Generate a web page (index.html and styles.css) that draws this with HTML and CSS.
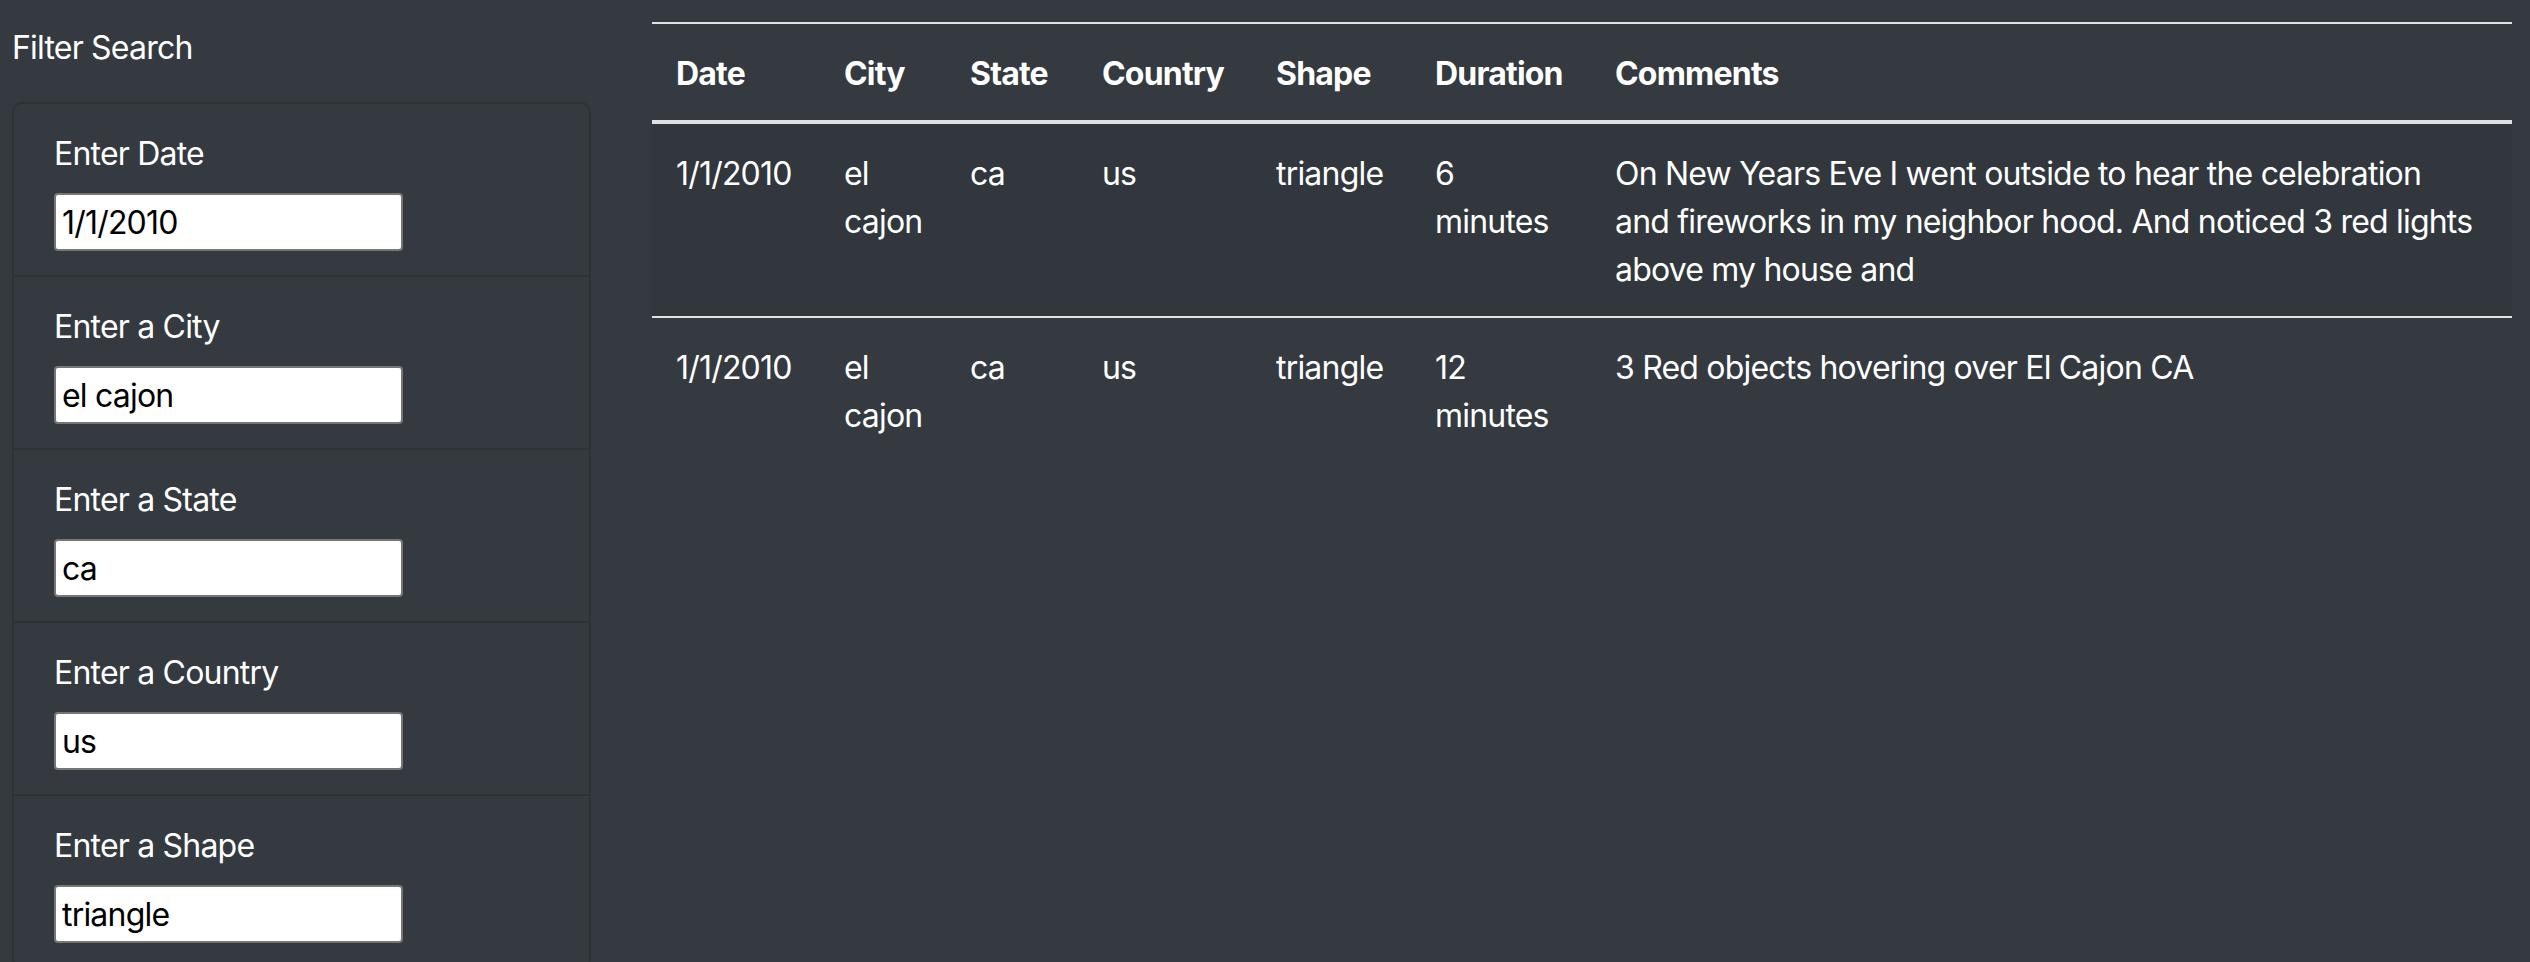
FILE: index.html
```html
<!DOCTYPE html>
<html lang="en">
<head>
<meta charset="utf-8">
<title>UFO Sightings</title>
<link rel="stylesheet" href="styles.css">
</head>
<body>
<div class="page">
  <aside class="sidebar">
    <h5 class="sidebar-title">Filter Search</h5>
    <ul class="filters">
      <li class="filter">
        <label class="filter-label" for="date">Enter Date</label>
        <input class="filter-input" id="date" type="text" value="1/1/2010">
      </li>
      <li class="filter">
        <label class="filter-label" for="city">Enter a City</label>
        <input class="filter-input" id="city" type="text" value="el cajon">
      </li>
      <li class="filter">
        <label class="filter-label" for="state">Enter a State</label>
        <input class="filter-input" id="state" type="text" value="ca">
      </li>
      <li class="filter">
        <label class="filter-label" for="country">Enter a Country</label>
        <input class="filter-input" id="country" type="text" value="us">
      </li>
      <li class="filter">
        <label class="filter-label" for="shape">Enter a Shape</label>
        <input class="filter-input" id="shape" type="text" value="triangle">
      </li>
    </ul>
  </aside>
  <main class="results">
    <table class="ufo-table">
      <colgroup>
        <col class="c-date"><col class="c-city"><col class="c-state"><col class="c-country"><col class="c-shape"><col class="c-duration"><col class="c-comments">
      </colgroup>
      <thead>
        <tr>
          <th>Date</th><th>City</th><th>State</th><th>Country</th><th>Shape</th><th>Duration</th><th>Comments</th>
        </tr>
      </thead>
      <tbody>
        <tr class="row-odd">
          <td>1/1/2010</td><td>el cajon</td><td>ca</td><td>us</td><td>triangle</td><td>6 minutes</td>
          <td>On New Years Eve I went outside to hear the celebration<br>and fireworks in my neighbor hood. And noticed 3 red lights above my house and</td>
        </tr>
        <tr>
          <td>1/1/2010</td><td>el cajon</td><td>ca</td><td>us</td><td>triangle</td><td>12 minutes</td>
          <td>3 Red objects hovering over El Cajon CA</td>
        </tr>
      </tbody>
    </table>
  </main>
</div>
</body>
</html>
```

FILE: styles.css
```css
* { box-sizing: border-box; }

html, body {
  margin: 0;
  padding: 0;
  height: 100%;
}

body {
  background: #343a40;
  color: #ffffff;
  font-family: Inter, "Noto Sans", "Liberation Sans", sans-serif;
  font-size: 32px;
  line-height: 1.5;
  letter-spacing: -0.025em;
  overflow: hidden;
}

.page {
  display: flex;
  align-items: flex-start;
  gap: 61px;
  padding-left: 12px;
}

.sidebar {
  width: 579px;
  flex: 0 0 579px;
}

.sidebar-title {
  margin: 0;
  padding-top: 24px;
  margin-bottom: 30px;
  font-size: 32px;
  font-weight: 400;
  line-height: 48px;
}

.filters {
  list-style: none;
  margin: 0;
  padding: 0;
  border: 2px solid #2d3237;
  border-radius: 10px;
}

.filter {
  padding: 24px 40px;
  border-top: 2px solid #2d3237;
}

.filter:first-child {
  border-top: none;
}

.filter-label {
  display: block;
  padding-top: 2px;
  margin-bottom: 15px;
}

.filter-input {
  display: block;
  width: 349px;
  height: 58px;
  margin: 0;
  padding: 0 6px;
  border: 2px solid #767676;
  border-radius: 4px;
  background: #ffffff;
  color: #000000;
  font-family: inherit;
  font-size: 32px;
  line-height: 48px;
  letter-spacing: -0.025em;
}

.results {
  width: 1860px;
  flex: 0 0 1860px;
  padding-top: 22px;
}

.ufo-table {
  width: 1860px;
  table-layout: fixed;
  border-collapse: collapse;
}

.c-date { width: 168px; }
.c-city { width: 126px; }
.c-state { width: 132px; }
.c-country { width: 174px; }
.c-shape { width: 159px; }
.c-duration { width: 180px; }
.c-comments { width: 921px; }

.ufo-table th,
.ufo-table td {
  padding: 26px 24px 22px;
  text-align: left;
  vertical-align: top;
  border-top: 2px solid #dee2e6;
}

.ufo-table th {
  font-weight: 700;
  border-bottom: 4px solid #dee2e6;
}

.row-odd {
  background: rgba(0, 0, 0, 0.05);
}
```
